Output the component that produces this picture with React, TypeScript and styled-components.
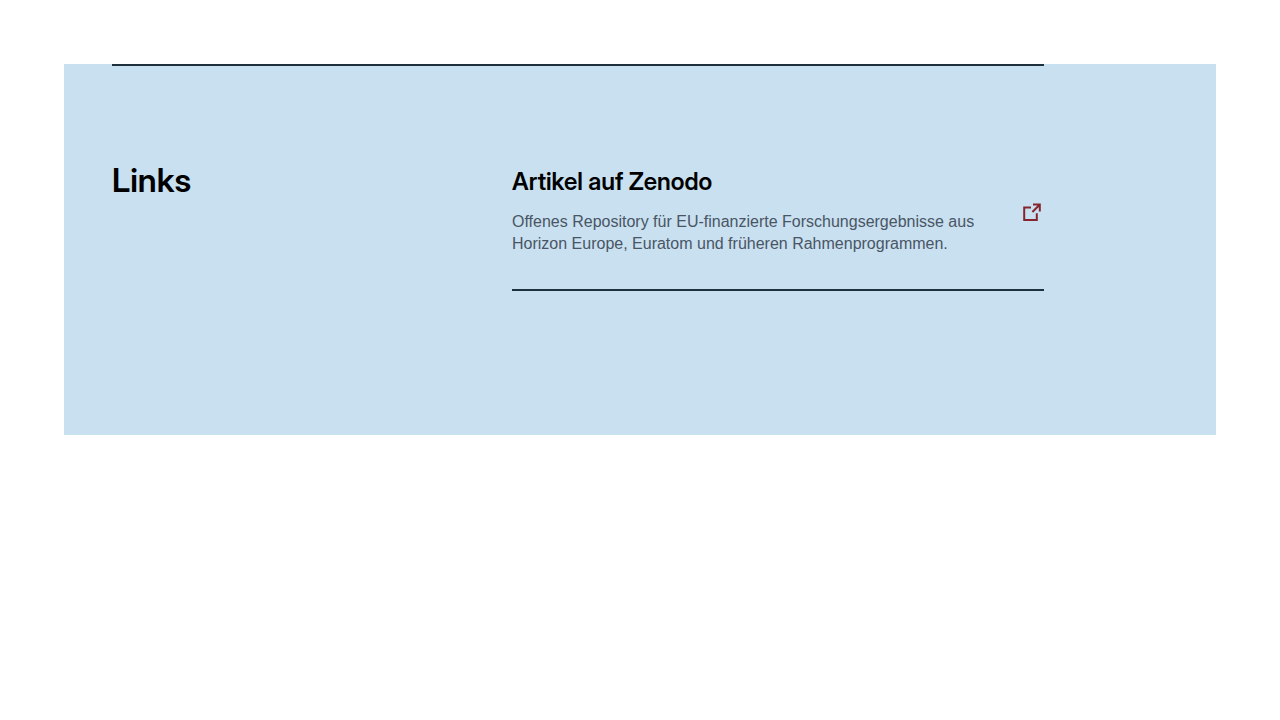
import React from "react";
import styled, { createGlobalStyle } from "styled-components";

const GlobalStyle = createGlobalStyle`
  body {
    margin: 0;
    background: #ffffff;
    font-family: "Liberation Sans", Arial, sans-serif;
  }
  *, *::before, *::after { box-sizing: border-box; }
`;

const Page = styled.main`
  padding: 64px;
`;

const Panel = styled.section`
  padding: 0 48px 144px;
  background: #c8e0ef;
`;

const Content = styled.div`
  display: grid;
  grid-template-columns: 368fr 532fr;
  column-gap: 32px;
  max-width: 932px;
  padding-top: 94px;
  border-top: 2px solid #1f303d;
`;

const Heading = styled.h2`
  margin: 0;
  font-family: "Inter Display", Inter, sans-serif;
  font-size: 33px;
  line-height: 40px;
  font-weight: 600;
  color: #000000;
`;

const LinkList = styled.ul`
  margin: 0;
  padding: 8px 0 0;
  list-style: none;
`;

const LinkItem = styled.li`
  padding-bottom: 34px;
  border-bottom: 2px solid #1f303d;
`;

const LinkCard = styled.a`
  display: flex;
  align-items: center;
  justify-content: space-between;
  gap: 32px;
  color: inherit;
  text-decoration: none;
`;

const LinkTitle = styled.h3`
  margin: 0 0 16px;
  font-family: "Inter Display", Inter, sans-serif;
  font-size: 24px;
  line-height: 27px;
  font-weight: 600;
  color: #000000;
`;

const Description = styled.p`
  margin: 0;
  font-size: 16px;
  line-height: 22px;
  color: #4a5565;
`;

const Icon = styled.svg`
  flex: none;
  width: 24px;
  height: 24px;
  fill: none;
  stroke: #85262e;
  stroke-width: 2;
`;

export default function App() {
  return (
    <>
      <GlobalStyle />
      <Page>
        <Panel aria-labelledby="links-heading">
          <Content>
            <Heading id="links-heading">Links</Heading>
            <LinkList>
              <LinkItem>
                <LinkCard href="https://zenodo.org/">
                  <div>
                    <LinkTitle>Artikel auf Zenodo</LinkTitle>
                    <Description>
                      Offenes Repository für EU-finanzierte Forschungsergebnisse aus
                      Horizon Europe, Euratom und früheren Rahmenprogrammen.
                    </Description>
                  </div>
                  <Icon viewBox="0 0 24 24" aria-hidden="true">
                    <path d="M11 7.4H4.2v12.6h12.6V13.2M13 4.6h6.8v6.8M19.6 4.8l-7.2 7.2" />
                  </Icon>
                </LinkCard>
              </LinkItem>
            </LinkList>
          </Content>
        </Panel>
      </Page>
    </>
  );
}
